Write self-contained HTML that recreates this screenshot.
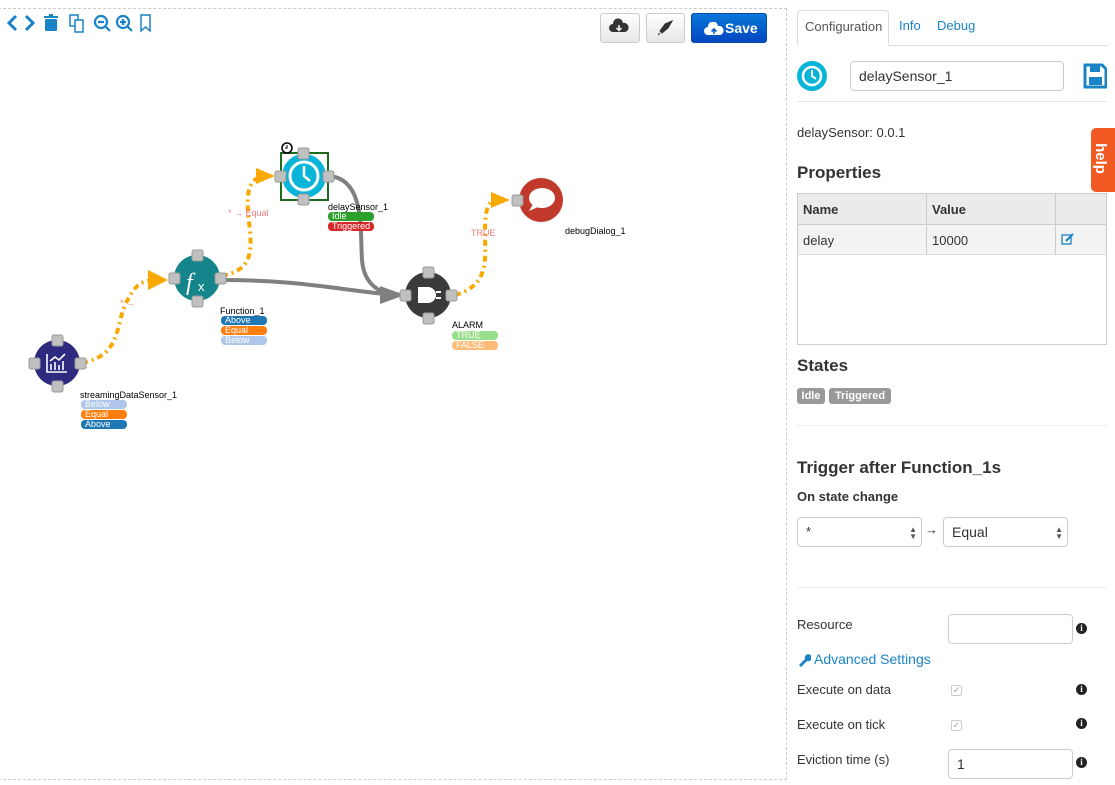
<!DOCTYPE html>
<html><head><meta charset="utf-8"><style>
*{box-sizing:border-box}
body{margin:0;width:1115px;height:785px;background:#fff;font-family:"Liberation Sans",sans-serif;position:relative;overflow:hidden;color:#333}
.abs{position:absolute}
.canvas{position:absolute;left:-2px;top:8px;width:789px;height:772px;border:1px dashed #ccc}
.btn{position:absolute;top:13px;height:30px;border:1px solid #ccc;border-radius:3px;background:linear-gradient(#fff,#e6e6e6)}
.lbl{position:absolute;font-size:9px;color:#000;line-height:10px}
.bd{position:absolute;width:46px;height:9px;border-radius:4px;color:#fff;font-size:9px;line-height:9px;padding-left:4px}
.tab{position:absolute;top:10px;height:36px;font-size:13px;line-height:32px}
h3{position:absolute;margin:0;font-size:17px;font-weight:bold;color:#333}
.t13{position:absolute;font-size:13px;color:#333}
.inp{position:absolute;border:1px solid #ccc;border-radius:4px;background:#fff;font-size:14px;padding-left:8px}
.info{position:absolute;width:11px;height:11px;border-radius:50%;background:#222;color:#fff;font-size:9px;font-weight:bold;text-align:center;line-height:11px;font-family:"Liberation Serif",serif}
.cb{position:absolute;width:11px;height:11px;border:1px solid #ccc;border-radius:2px;font-size:9px;color:#999;line-height:9px;text-align:center}
</style></head><body>
<div class="canvas"></div>
<svg class="abs" style="left:4px;top:12px" width="152" height="22" viewBox="0 0 152 22" fill="none" stroke="#1a83c6" stroke-width="3">
<path d="M12 4 L5 11 L12 18"/><path d="M22 4 L29 11 L22 18"/>
<g stroke-width="0" fill="#1a83c6"><rect x="40" y="4" width="14" height="2"/><rect x="45" y="2" width="4" height="2"/><rect x="41" y="7" width="12" height="12" rx="1"/></g>
<g stroke-width="1.5"><rect x="66" y="3" width="8" height="11"/><rect x="71" y="8" width="8" height="12" fill="#fff"/></g>
<g stroke-width="2.2"><circle cx="97" cy="10" r="6"/><path d="M101 14 L106 19M94 10h6"/><circle cx="119" cy="10" r="6"/><path d="M123 14 L128 19M116 10h6M119 7v6"/></g>
<path d="M137 3h9v16l-4.5-4-4.5 4z" stroke-width="1.5"/>
</svg>
<div class="btn" style="left:600px;width:40px"><svg width="38" height="28"><path d="M12 18a4 4 0 0 1 0-8a5 5 0 0 1 10-1a4 4 0 0 1 2 9z" fill="#333"/><path d="M18 11v5M15.5 14l2.5 2.5 2.5-2.5" stroke="#fff" stroke-width="1.5" fill="none"/></svg></div>
<div class="btn" style="left:646px;width:39px"><svg width="37" height="28"><path d="M25 7 L18 10 L13 17 L15 19 L21 14 Z M13 19l-2 2" fill="#333" stroke="#333"/></svg></div>
<div class="btn" style="left:691px;width:76px;background:linear-gradient(#0a78d8,#0046c0);border-color:#0a4ab0"><span style="position:absolute;left:33px;top:0;color:#fff;font-weight:bold;font-size:14px;line-height:29px;white-space:nowrap">Save</span>
<svg class="abs" style="left:12px;top:8px" width="20" height="14"><path d="M4 13a4 4 0 0 1 0-8a5 5 0 0 1 10-1a4 4 0 0 1 2 9z" fill="#fff"/><path d="M10 12V7M7.5 9.5L10 7l2.5 2.5" stroke="#0a5cc8" stroke-width="1.6" fill="none"/></svg></div>

<svg class="abs" style="left:0;top:0" width="787" height="785">
<g fill="none" stroke="#f9a800" stroke-width="4" stroke-dasharray="6 4 2 4">
<path d="M82 363 C120 355 115 330 125 305 C135 285 140 280 158 280"/>
<path d="M222 276 C250 270 252 255 250 230 C246 200 245 178 265 176"/>
<path d="M455 295 C490 285 485 260 485 230 C485 205 490 200 498 200"/>
</g>
<path d="M148 270 L168 280 L148 290 Z" fill="#f9a800"/>
<path d="M256 168 L275 176 L256 184 Z" fill="#f9a800"/>
<path d="M491 192 L510 200 L491 208 Z" fill="#f9a800"/>
<g fill="none" stroke="#808080" stroke-width="4">
<path d="M222 280 C300 280 340 290 395 295"/>
<path d="M330 176 C365 180 360 230 362 260 C364 285 380 293 395 295"/>
</g>
<path d="M380 286 L405 295 L380 304 Z" fill="#808080"/>
<text x="120" y="306" font-size="9" fill="#f08080">* →</text>
<text x="228" y="216" font-size="9" fill="#f08080">* → Equal</text>
<text x="471" y="236" font-size="9" fill="#f08080">TRUE</text>
<circle cx="57" cy="363" r="23" fill="#2d2a7f"/>
<g stroke="#fff" stroke-width="1.6" fill="none"><path d="M47 354v18h20"/><path d="M51 370v-6M55 370v-8M59 370v-5M63 370v-9"/><path d="M50 361l5-4 4 3 6-6"/></g>
<circle cx="197" cy="278" r="23" fill="#14868b"/>
<text x="186" y="290" font-size="24" font-style="italic" fill="#fff" font-family="Liberation Serif">f</text><text x="198" y="291" font-size="13" fill="#fff">x</text>
<rect x="281" y="153" width="47" height="47" fill="none" stroke="#1e6b1e" stroke-width="2"/>
<circle cx="304" cy="176" r="22" fill="#08b5d9"/>
<circle cx="304" cy="176" r="14" fill="none" stroke="#fff" stroke-width="3"/>
<path d="M304 166v10l6 5" stroke="#fff" stroke-width="2.5" fill="none"/>
<circle cx="287" cy="148" r="5" fill="#fff" stroke="#000" stroke-width="1.5"/><path d="M287 145v3h-2" stroke="#000" fill="none"/>
<circle cx="428" cy="295" r="23" fill="#3a3a3a"/>
<path d="M418 287h10a8 8 0 0 1 0 16h-10z" fill="#fff"/><path d="M436 292h5M436 298h5" stroke="#fff" stroke-width="2"/>
<circle cx="541" cy="200" r="22" fill="#c0392b"/>
<ellipse cx="542" cy="198" rx="13" ry="10" fill="#fff"/><path d="M533 204l-4 7 9-4z" fill="#fff"/>
<g fill="#c0c0c0" stroke="#999" stroke-width="1">
<rect x="52" y="335" width="11" height="11" rx="2"/><rect x="29" y="358" width="11" height="11" rx="2"/><rect x="75" y="358" width="11" height="11" rx="2"/><rect x="52" y="381" width="11" height="11" rx="2"/>
<rect x="192" y="250" width="11" height="11" rx="2"/><rect x="169" y="273" width="11" height="11" rx="2"/><rect x="215" y="273" width="11" height="11" rx="2"/><rect x="192" y="296" width="11" height="11" rx="2"/>
<rect x="298" y="148" width="11" height="11" rx="2"/><rect x="275" y="171" width="11" height="11" rx="2"/><rect x="323" y="171" width="11" height="11" rx="2"/><rect x="298" y="194" width="11" height="11" rx="2"/>
<rect x="423" y="267" width="11" height="11" rx="2"/><rect x="400" y="290" width="11" height="11" rx="2"/><rect x="446" y="290" width="11" height="11" rx="2"/><rect x="423" y="313" width="11" height="11" rx="2"/>
<rect x="512" y="195" width="11" height="11" rx="2"/>
</g>
</svg>
<div class="lbl" style="left:80px;top:390px">streamingDataSensor_1</div>
<div class="bd" style="left:81px;top:400px;background:#aec7e8">Below</div>
<div class="bd" style="left:81px;top:410px;background:#ff7f0e">Equal</div>
<div class="bd" style="left:81px;top:420px;background:#1f77b4">Above</div>
<div class="lbl" style="left:220px;top:306px">Function_1</div>
<div class="bd" style="left:221px;top:316px;background:#1f77b4">Above</div>
<div class="bd" style="left:221px;top:326px;background:#ff7f0e">Equal</div>
<div class="bd" style="left:221px;top:336px;background:#aec7e8">Below</div>
<div class="lbl" style="left:328px;top:202px">delaySensor_1</div>
<div class="bd" style="left:328px;top:212px;background:#2ca02c">Idle</div>
<div class="bd" style="left:328px;top:222px;background:#d62728">Triggered</div>
<div class="lbl" style="left:452px;top:320px">ALARM</div>
<div class="bd" style="left:452px;top:331px;background:#98df8a">TRUE</div>
<div class="bd" style="left:452px;top:341px;background:#ffbb78">FALSE</div>
<div class="lbl" style="left:565px;top:226px">debugDialog_1</div>

<div class="abs" style="left:797px;top:45px;width:310px;border-top:1px solid #ddd"></div>
<div class="tab" style="left:797px;width:92px;border:1px solid #ddd;border-bottom-color:#fff;border-radius:4px 4px 0 0;background:#fff;padding-left:7px;color:#555">Configuration</div>
<div class="tab" style="left:899px;color:#1a83c6">Info</div>
<div class="tab" style="left:937px;color:#1a83c6">Debug</div>
<svg class="abs" style="left:797px;top:61px" width="30" height="30"><circle cx="15" cy="15" r="15" fill="#08b5d9"/><circle cx="15" cy="15" r="9" fill="none" stroke="#fff" stroke-width="2.5"/><path d="M15 9v6l4 3" stroke="#fff" stroke-width="2" fill="none"/></svg>
<div class="inp" style="left:850px;top:61px;width:214px;height:30px;line-height:28px">delaySensor_1</div>
<svg class="abs" style="left:1083px;top:63px" width="24" height="26"><path d="M2 2h17l4 4v18H2z" fill="none" stroke="#1a83c6" stroke-width="3"/><rect x="7" y="3" width="10" height="6" fill="#1a83c6"/><rect x="6" y="14" width="13" height="8" fill="#1a83c6"/></svg>
<div class="abs" style="left:797px;top:101px;width:310px;border-top:1px solid #e5e5e5"></div>
<div class="t13" style="left:797px;top:125px">delaySensor: 0.0.1</div>
<div class="abs" style="left:1091px;top:128px;width:24px;height:64px;background:#f15a22;border-radius:5px 0 0 5px"><div style="color:#fff;font-weight:bold;font-size:15px;transform:rotate(90deg);position:absolute;left:-6px;top:22px">help</div></div>
<h3 style="left:797px;top:163px">Properties</h3>
<div class="abs" style="left:797px;top:193px;width:310px;height:152px;border:1px solid #ccc"></div>
<div class="abs" style="left:798px;top:194px;width:308px;height:31px;background:#ebebeb;border-bottom:1px solid #ccc"></div>
<div class="abs" style="left:798px;top:225px;width:308px;height:30px;background:#f3f3f3;border-bottom:1px solid #ddd"></div>
<div class="abs" style="left:926px;top:194px;height:61px;border-left:1px solid #ccc"></div>
<div class="abs" style="left:1055px;top:194px;height:61px;border-left:1px solid #ccc"></div>
<div class="t13" style="left:803px;top:202px;font-weight:bold">Name</div>
<div class="t13" style="left:932px;top:202px;font-weight:bold">Value</div>
<div class="t13" style="left:803px;top:233px">delay</div>
<div class="t13" style="left:932px;top:233px">10000</div>
<svg class="abs" style="left:1061px;top:233px" width="14" height="12"><rect x="1" y="2" width="9" height="9" fill="none" stroke="#1a83c6" stroke-width="1.3"/><path d="M5 8l7-7" stroke="#1a83c6" stroke-width="2"/></svg>
<h3 style="left:797px;top:356px">States</h3>
<div class="abs" style="left:797px;top:388px;width:28px;height:16px;background:#999;border-radius:3px;color:#fff;font-size:11px;font-weight:bold;line-height:16px;text-align:center">Idle</div>
<div class="abs" style="left:829px;top:388px;width:62px;height:16px;background:#999;border-radius:3px;color:#fff;font-size:11px;font-weight:bold;line-height:16px;text-align:center">Triggered</div>
<div class="abs" style="left:797px;top:425px;width:310px;border-top:1px solid #eee"></div>
<h3 style="left:797px;top:458px">Trigger after Function_1s</h3>
<div class="t13" style="left:797px;top:489px;font-weight:bold">On state change</div>
<div class="inp" style="left:797px;top:517px;width:125px;height:30px;line-height:28px;font-size:13px">*<span style="position:absolute;right:4px;font-size:8px;color:#555;line-height:7px;top:8px">▲<br>▼</span></div>
<div class="t13" style="left:925px;top:522px">→</div>
<div class="inp" style="left:943px;top:517px;width:125px;height:30px;line-height:28px">Equal<span style="position:absolute;right:4px;font-size:8px;color:#555;line-height:7px;top:8px">▲<br>▼</span></div>
<div class="abs" style="left:797px;top:587px;width:310px;border-top:1px solid #eee"></div>
<div class="t13" style="left:797px;top:617px">Resource</div>
<div class="inp" style="left:948px;top:614px;width:125px;height:30px"></div>
<div class="info" style="left:1076px;top:623px">i</div>
<svg class="abs" style="left:797px;top:653px" width="14" height="14"><path d="M2 12l6-6a3.5 3.5 0 1 1 2 2l-6 6z" fill="#1a83c6"/></svg>
<div class="abs" style="left:814px;top:651px;font-size:14px;color:#1a83c6">Advanced Settings</div>
<div class="t13" style="left:797px;top:682px">Execute on data</div>
<div class="cb" style="left:951px;top:685px">✓</div>
<div class="info" style="left:1076px;top:684px">i</div>
<div class="t13" style="left:797px;top:717px">Execute on tick</div>
<div class="cb" style="left:951px;top:720px">✓</div>
<div class="info" style="left:1076px;top:718px">i</div>
<div class="t13" style="left:797px;top:752px">Eviction time (s)</div>
<div class="inp" style="left:948px;top:749px;width:125px;height:30px;line-height:28px">1</div>
<div class="info" style="left:1076px;top:757px">i</div>
</body></html>
